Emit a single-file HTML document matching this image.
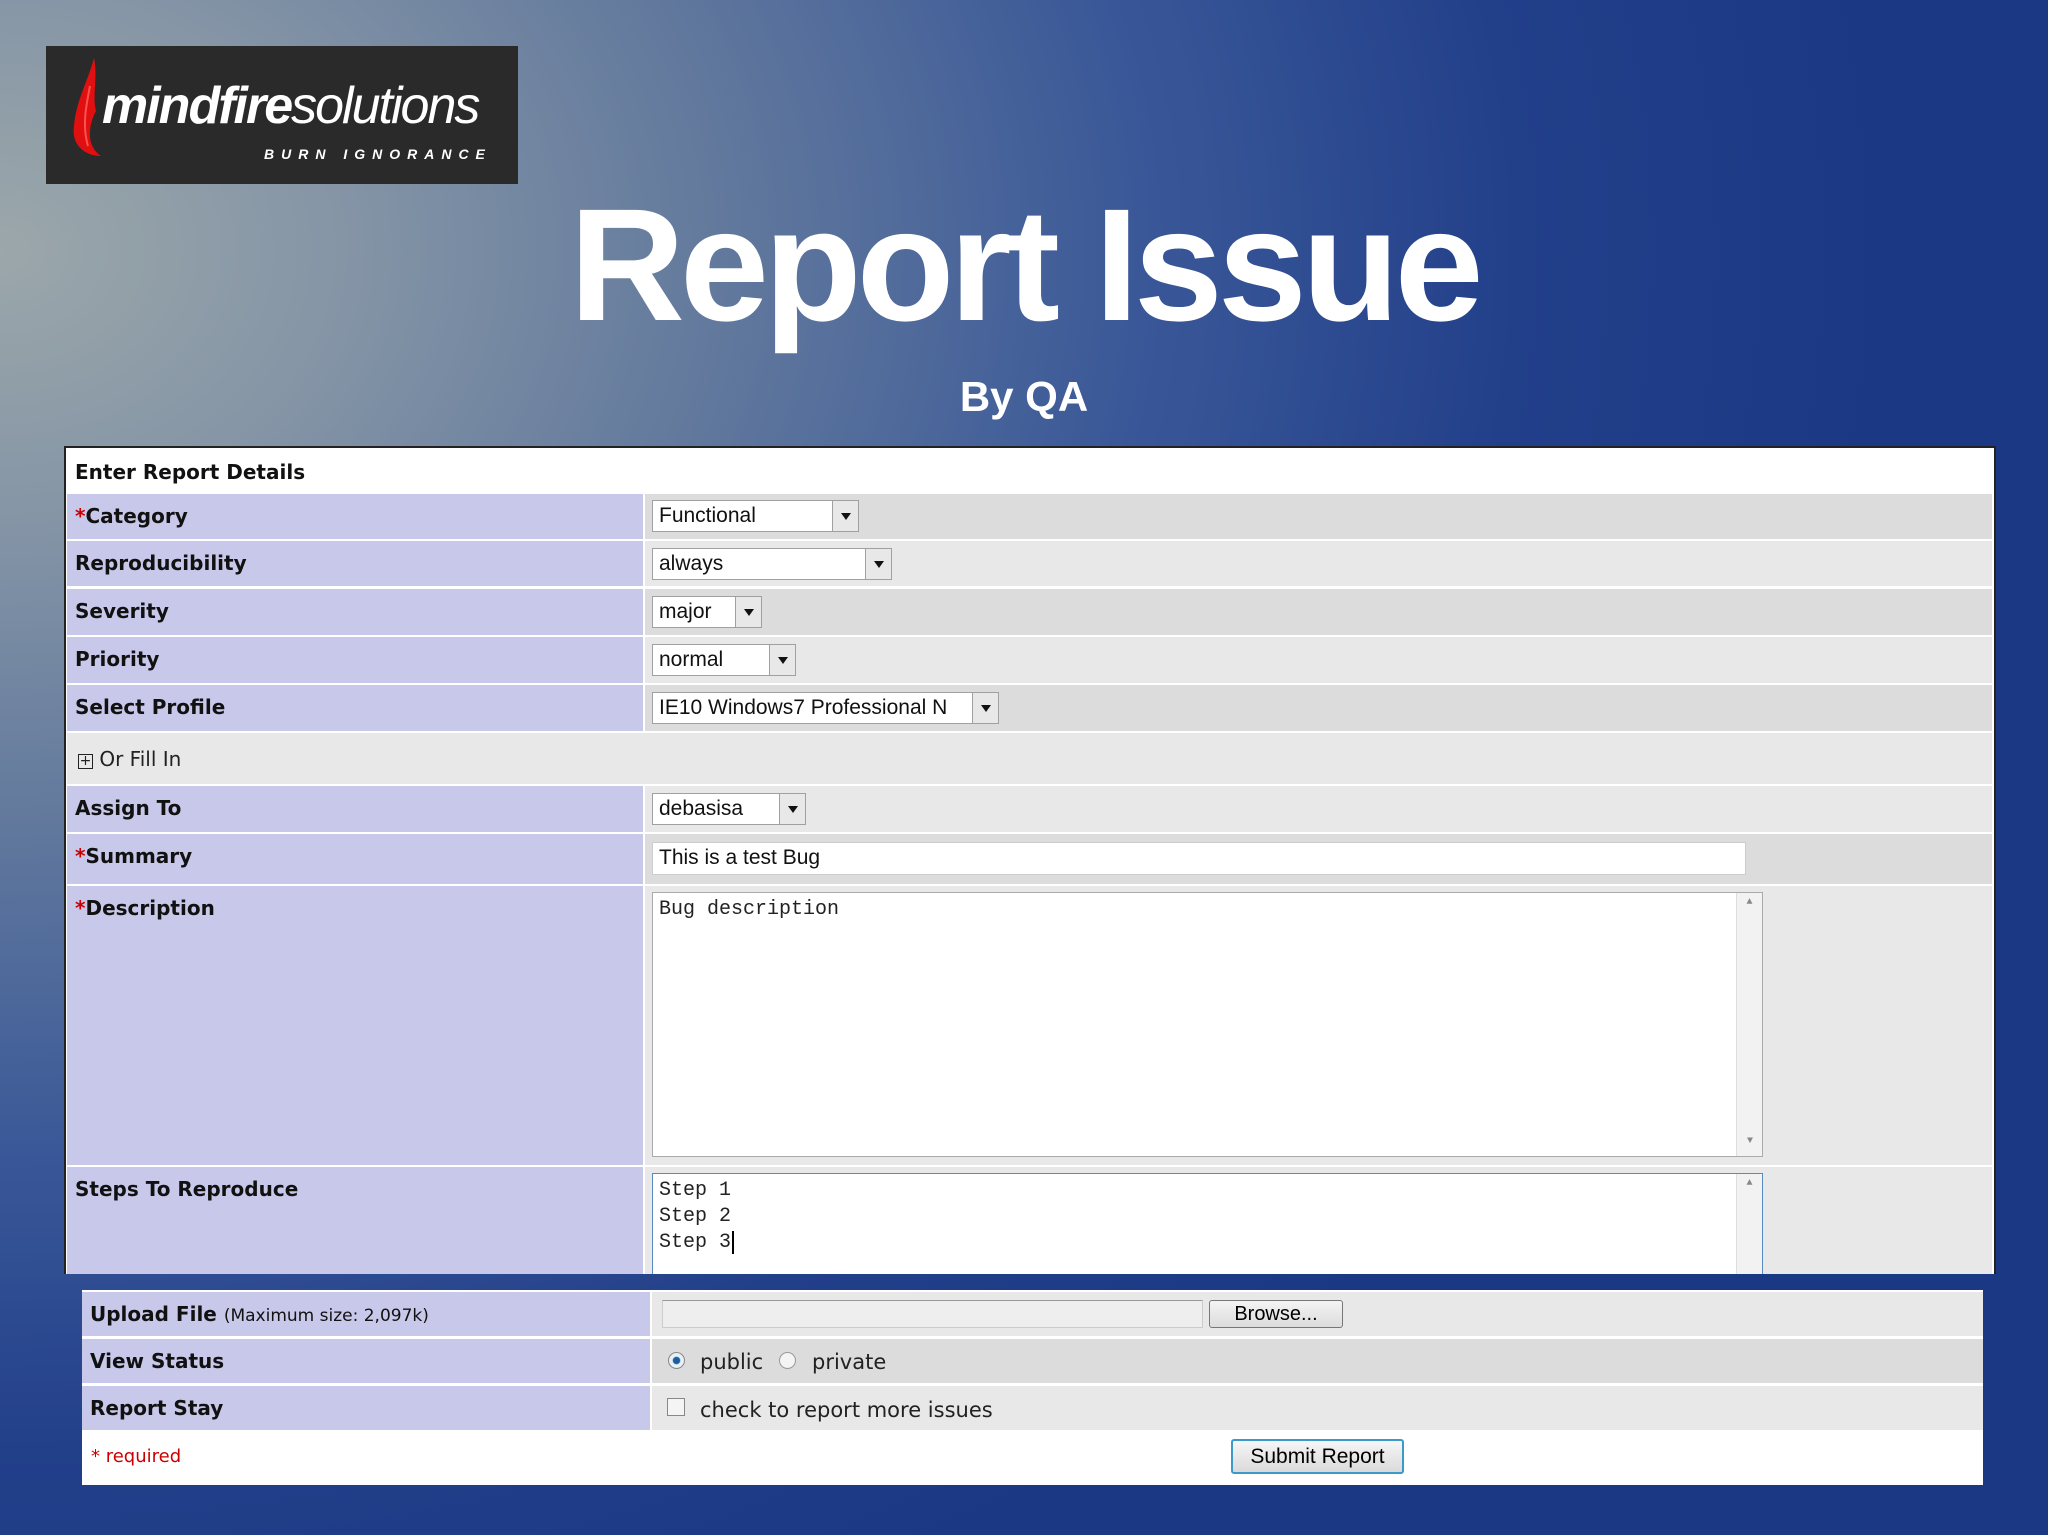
<!DOCTYPE html>
<html><head><meta charset="utf-8"><style>
*{margin:0;padding:0;box-sizing:border-box}
body{width:2048px;height:1535px;overflow:hidden;position:relative;font-family:"DejaVu Sans",sans-serif;
background:radial-gradient(ellipse 1900px 1500px at 0px 250px,#9ba7aa 0%,#8595a6 18%,#62799d 38%,#3a5898 60%,#223f8a 80%,#1a3884 100%);}
.a{position:absolute}
.lab{position:absolute;background:#c8c8ea;font-weight:bold;font-size:20px;color:#111;padding-left:8px;line-height:44px}
.val{position:absolute;background:#dcdcdc}
.val2{position:absolute;background:#e8e8e8}
.sel{position:absolute;background:#fff;border:1px solid #a0a0a0;font-family:"Liberation Sans",sans-serif;font-size:21px;line-height:30px;padding-left:6px;color:#111;white-space:nowrap;overflow:hidden}
.sel b{position:absolute;right:0;top:0;width:26px;height:100%;background:#e8e8e8;border-left:1px solid #a0a0a0}
.sel b:after{content:"";position:absolute;left:8px;top:12px;border-left:5px solid transparent;border-right:5px solid transparent;border-top:7px solid #111}
.req{color:#c00}
.mono{font-family:"Liberation Mono",monospace;font-size:20px;line-height:26px;color:#222}
</style></head><body>
<div class="a" style="left:46px;top:46px;width:472px;height:138px;background:#2a2a2a">
<svg class="a" style="left:20px;top:10px" width="50" height="110" viewBox="0 0 50 110"><path d="M28 2 C22 25 10 45 8 70 C5 90 20 100 35 100 C20 90 22 70 30 55 C26 40 32 20 28 2Z" fill="#e01010"/><path d="M24 30 C20 50 16 70 22 90" stroke="#ff5050" stroke-width="2" fill="none"/></svg>
<div class="a" style="left:56px;top:30px;font-family:'Liberation Sans',sans-serif;font-style:italic;font-size:52px;color:#fff;letter-spacing:-2px;white-space:nowrap"><b>mindfire</b><span style="font-weight:normal">solutions</span></div>
<div class="a" style="left:218px;top:100px;font-family:'Liberation Sans',sans-serif;font-style:italic;font-weight:bold;font-size:14px;color:#fff;letter-spacing:7px">BURN IGNORANCE</div>
</div>
<div class="a" style="left:0;width:2048px;top:170px;text-align:center;font-family:'Liberation Sans',sans-serif;font-weight:bold;font-size:160px;line-height:190px;color:#fff;letter-spacing:-5px">Report Issue</div>
<div class="a" style="left:0;width:2048px;top:373px;text-align:center;font-family:'Liberation Sans',sans-serif;font-weight:bold;font-size:42px;color:#fff">By QA</div>

<div class="a" style="left:64px;top:446px;width:1932px;height:828px;background:#fff;border:2px solid #222;border-bottom:none"></div>
<div class="a" style="left:75px;top:460px;font-weight:bold;font-size:20px;color:#111">Enter Report Details</div>

<div class="lab" style="left:67px;top:494px;width:576px;height:45px"><span class="req">*</span>Category</div>
<div class="val" style="left:645px;top:494px;width:1347px;height:45px"></div>
<div class="lab" style="left:67px;top:541px;width:576px;height:45px">Reproducibility</div>
<div class="val2" style="left:645px;top:541px;width:1347px;height:45px"></div>
<div class="lab" style="left:67px;top:589px;width:576px;height:46px">Severity</div>
<div class="val" style="left:645px;top:589px;width:1347px;height:46px"></div>
<div class="lab" style="left:67px;top:637px;width:576px;height:46px">Priority</div>
<div class="val2" style="left:645px;top:637px;width:1347px;height:46px"></div>
<div class="lab" style="left:67px;top:685px;width:576px;height:46px">Select Profile</div>
<div class="val" style="left:645px;top:685px;width:1347px;height:46px"></div>
<div class="val2" style="left:67px;top:733px;width:1925px;height:51px"></div>
<div class="a" style="left:78px;top:746px;font-size:20px;color:#222;line-height:26px"><span style="display:inline-block;width:15px;height:15px;border:1px solid #222;font-size:14px;line-height:12px;text-align:center;vertical-align:1px">+</span> Or Fill In</div>
<div class="lab" style="left:67px;top:786px;width:576px;height:46px">Assign To</div>
<div class="val2" style="left:645px;top:786px;width:1347px;height:46px"></div>
<div class="lab" style="left:67px;top:834px;width:576px;height:50px"><span class="req">*</span>Summary</div>
<div class="val" style="left:645px;top:834px;width:1347px;height:50px"></div>
<div class="lab" style="left:67px;top:886px;width:576px;height:279px"><span class="req">*</span>Description</div>
<div class="val2" style="left:645px;top:886px;width:1347px;height:279px"></div>
<div class="lab" style="left:67px;top:1167px;width:576px;height:107px">Steps To Reproduce</div>
<div class="val2" style="left:645px;top:1167px;width:1347px;height:107px"></div>

<div class="sel" style="left:652px;top:500px;width:207px;height:32px">Functional<b></b></div>
<div class="sel" style="left:652px;top:548px;width:240px;height:32px">always<b></b></div>
<div class="sel" style="left:652px;top:596px;width:110px;height:32px">major<b></b></div>
<div class="sel" style="left:652px;top:644px;width:144px;height:32px">normal<b></b></div>
<div class="sel" style="left:652px;top:692px;width:347px;height:32px">IE10 Windows7 Professional N<b></b></div>
<div class="sel" style="left:652px;top:793px;width:154px;height:32px">debasisa<b></b></div>
<div class="sel" style="left:652px;top:842px;width:1094px;height:33px;border-color:#ccc">This is a test Bug</div>
<div class="a mono" style="left:652px;top:892px;width:1111px;height:265px;background:#fff;border:1px solid #aaa;padding:4px 6px">Bug description
<div class="a" style="right:0;top:0;width:26px;height:100%;background:#f2f2f2;border-left:1px solid #ddd;font-size:10px;color:#888;text-align:center;line-height:20px">▲<div class="a" style="bottom:4px;width:26px">▼</div></div></div>
<div class="a mono" style="left:652px;top:1173px;width:1111px;height:101px;background:#fff;border:1px solid #5a8ac0;border-bottom:none;padding:4px 6px">Step 1<br>Step 2<br>Step 3<span style="border-left:2px solid #000;margin-left:1px"></span>
<div class="a" style="right:0;top:0;width:26px;height:100%;background:#f2f2f2;border-left:1px solid #ddd;font-size:10px;color:#888;text-align:center;line-height:20px">▲</div></div>

<div class="a" style="left:82px;top:1290px;width:1901px;height:195px;background:#fff"></div>
<div class="lab" style="left:82px;top:1292px;width:568px;height:44px">Upload File <span style="font-weight:normal;font-size:17px">(Maximum size: 2,097k)</span></div>
<div class="val2" style="left:652px;top:1292px;width:1331px;height:44px"></div>
<div class="lab" style="left:82px;top:1339px;width:568px;height:44px">View Status</div>
<div class="val" style="left:652px;top:1339px;width:1331px;height:44px"></div>
<div class="lab" style="left:82px;top:1386px;width:568px;height:44px">Report Stay</div>
<div class="val2" style="left:652px;top:1386px;width:1331px;height:44px"></div>
<div class="a" style="left:662px;top:1300px;width:541px;height:28px;background:#eee;border:1px solid #ccc;border-top-color:#999"></div>
<div class="a" style="left:1209px;top:1300px;width:134px;height:28px;background:linear-gradient(#f4f4f4,#dcdcdc);border:1px solid #777;border-radius:3px;font-family:'Liberation Sans',sans-serif;font-size:20px;text-align:center;line-height:26px">Browse...</div>
<div class="a" style="left:668px;top:1352px;width:17px;height:17px;border-radius:50%;border:1px solid #888;background:radial-gradient(circle,#1a5fa0 30%,#e8f0f8 40%)"></div>
<div class="a" style="left:700px;top:1350px;font-size:21px;color:#222">public</div>
<div class="a" style="left:779px;top:1352px;width:17px;height:17px;border-radius:50%;border:1px solid #999;background:#f4f4f4"></div>
<div class="a" style="left:812px;top:1350px;font-size:21px;color:#222">private</div>
<div class="a" style="left:667px;top:1398px;width:18px;height:18px;border:1px solid #888;background:#f4f4f4"></div>
<div class="a" style="left:700px;top:1398px;font-size:21px;color:#222">check to report more issues</div>
<div class="a" style="left:91px;top:1446px;font-size:18px;color:#c00">* required</div>
<div class="a" style="left:1231px;top:1439px;width:173px;height:35px;background:linear-gradient(#f6f6f6,#dadada);border:2px solid #3c9ac8;border-radius:3px;font-family:'Liberation Sans',sans-serif;font-size:21px;text-align:center;line-height:31px">Submit Report</div>
</body></html>
